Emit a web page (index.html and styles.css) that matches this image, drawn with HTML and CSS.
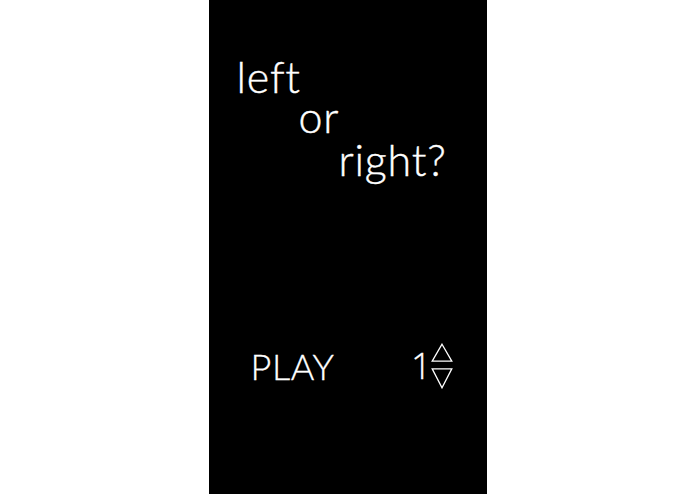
FILE: index.html
```html
<!DOCTYPE html>
<html>
<head>
<meta charset="utf-8">
<link rel="stylesheet" href="styles.css">
</head>
<body>
<main class="screen">
  <h1 class="title">
    <span class="line line-left">left</span>
    <span class="line line-or">or</span>
    <span class="line line-right">right?</span>
  </h1>
  <div class="controls">
    <span class="play">PLAY</span>
    <div class="level">
      <span class="level-num">1</span>
      <svg class="arrows" width="22" height="46" viewBox="0 0 22 46">
        <polygon points="11,1.2 20.8,18.2 1.2,18.2" fill="none" stroke="#fff" stroke-width="1.3"/>
        <polygon points="1.2,25.8 20.8,25.8 11,44.8" fill="none" stroke="#fff" stroke-width="1.3"/>
      </svg>
    </div>
  </div>
</main>
</body>
</html>
```
FILE: styles.css
```css
html, body {
  margin: 0;
  padding: 0;
  background: #fff;
}
.screen {
  width: 278px;
  height: 494px;
  margin: 0 auto;
  background: #000;
  color: #fff;
  font-family: Lato, "Open Sans", sans-serif;
  font-weight: 300;
  display: flex;
  flex-direction: column;
  box-sizing: border-box;
}
.title {
  margin: 0;
  padding-top: 57px;
  font-weight: 300;
  font-size: 43px;
  line-height: 40px;
  letter-spacing: 0.8px;
  display: flex;
  flex-direction: column;
  -webkit-text-stroke: 0.4px #fff;
}
.line {
  display: block;
}
.line-left { margin-left: 28px; }
.line-or { margin-left: 90px; }
.line-right { margin-left: 130px; margin-top: 3px; }
.controls {
  margin-top: 163px;
  display: flex;
  align-items: center;
  justify-content: space-between;
  padding: 0 34px 0 42px;
  -webkit-text-stroke: 0.3px #fff;
}
.play {
  font-size: 36px;
  line-height: 40px;
  letter-spacing: 0.6px;
}
.level {
  display: flex;
  align-items: center;
  gap: 0;
}
.level-num {
  font-family: "Open Sans", Lato, sans-serif;
  font-weight: 300;
  font-size: 36px;
  line-height: 40px;
  margin-right: -1px;
}
.arrows {
  display: block;
}
```
